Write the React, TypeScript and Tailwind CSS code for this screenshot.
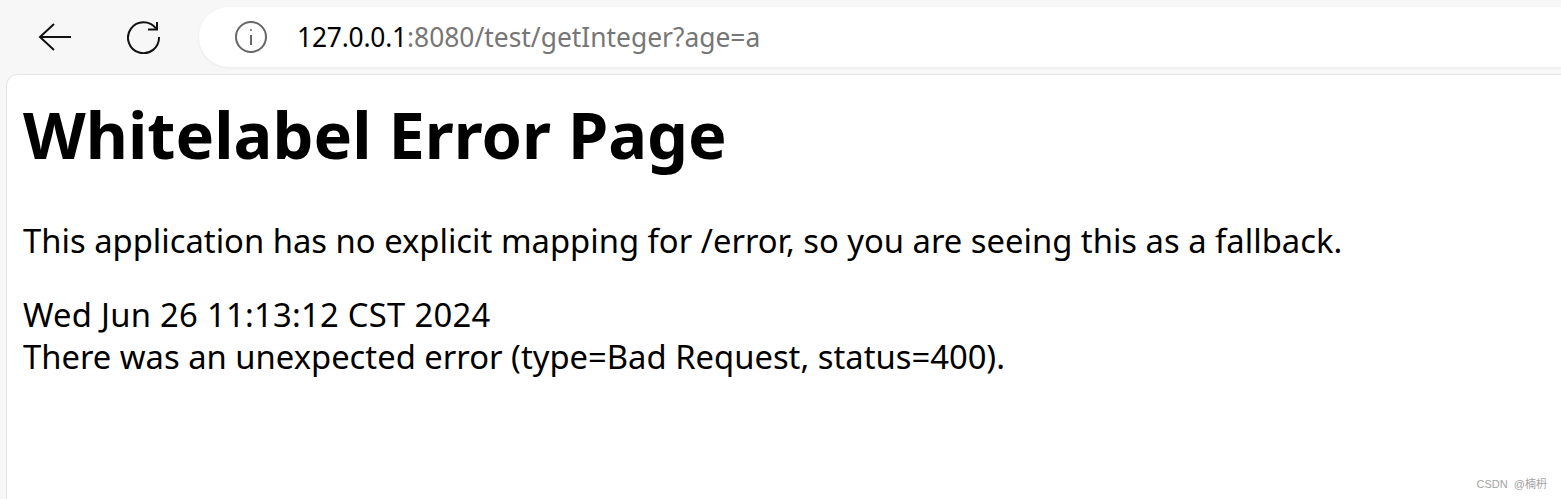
import React from 'react'

const App = () => {
  return (
    <div className="w-[1561px] h-[499px] overflow-hidden bg-[#f7f7f7] flex flex-col font-['Noto_Sans','Open_Sans',sans-serif]">
      {/* toolbar */}
      <div className="h-[74px] shrink-0 flex items-start">
        <div className="w-[199px] h-[74px] shrink-0 flex items-center">
          <svg className="ml-[38px]" width="34" height="30" viewBox="0 0 34 30" fill="none" stroke="#111" strokeWidth="2">
            <path d="M16 2 L2 15 L16 28 M2 15 H33" />
          </svg>
          <svg className="ml-[55px]" width="34" height="34" viewBox="0 0 34 34" fill="none" stroke="#111" strokeWidth="2">
            <path d="M29 8.5 A15.5 15.5 0 1 0 32 17" />
            <path d="M30 2 V9.5 H21" />
          </svg>
        </div>
        <div className="flex-1 h-[60px] mt-[7px] bg-white rounded-l-[30px] flex items-center shadow-[0_1px_3px_rgba(0,0,0,0.06)]">
          <svg className="ml-[36px]" width="32" height="32" viewBox="0 0 32 32" fill="none" stroke="#666" strokeWidth="2">
            <circle cx="16" cy="16" r="15" />
            <path d="M16 14 V24" />
            <circle cx="16" cy="9" r="1" fill="#666" stroke="none" />
          </svg>
          <span className="ml-[30px] text-[26.4px] leading-none text-[#767676]">
            <span className="text-black tracking-[-0.2px]">127.0.0.1</span>:8080/test/getInteger?age=a
          </span>
        </div>
      </div>
      {/* page */}
      <div className="flex-1 relative ml-[6px] bg-white rounded-tl-[12px] border-t border-l border-[#e6e6e6] pl-[16px] text-black">
        <h1 className="mt-[21px] text-[64.9px] leading-[76px] font-bold whitespace-nowrap">Whitelabel Error Page</h1>
        <p className="mt-[48px] text-[32.78px] leading-[42px] whitespace-nowrap">This application has no explicit mapping for /error, so you are seeing this as a fallback.</p>
        <div className="mt-[32px] text-[32.78px] leading-[42px] tracking-[0.27px] whitespace-nowrap">Wed Jun 26 11:13:12 CST 2024</div>
        <div className="text-[32.78px] leading-[42px] whitespace-nowrap">There was an unexpected error (type=Bad Request, status=400).</div>
        <div className="absolute right-[14px] bottom-[9px] text-[11px] leading-none text-[#a3a3a3] font-['Liberation_Sans','Noto_Sans_CJK_SC',sans-serif] whitespace-pre">CSDN  @楠枬</div>
      </div>
    </div>
  )
}

export default App
